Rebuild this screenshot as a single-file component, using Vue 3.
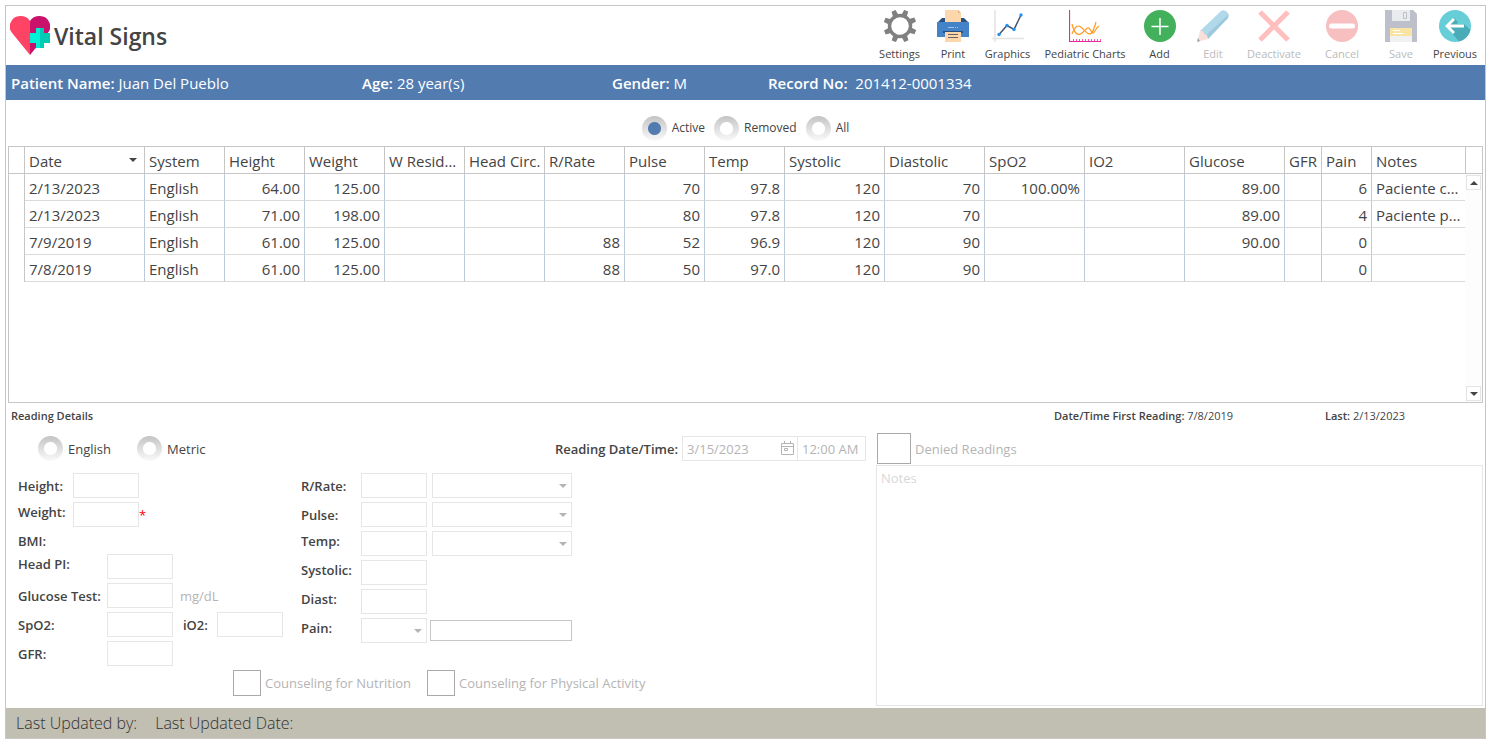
<script setup>
import { ref } from 'vue'

const tools = [
  { id: 'settings', label: 'Settings' },
  { id: 'print', label: 'Print' },
  { id: 'graphics', label: 'Graphics' },
  { id: 'pediatric', label: 'Pediatric Charts' },
  { id: 'add', label: 'Add' },
  { id: 'edit', label: 'Edit', disabled: true },
  { id: 'deactivate', label: 'Deactivate', disabled: true },
  { id: 'cancel', label: 'Cancel', disabled: true },
  { id: 'save', label: 'Save', disabled: true },
  { id: 'previous', label: 'Previous' },
]

const filter = ref('Active')
const filters = ['Active', 'Removed', 'All']
const unit = ref('')

const columns = [
  { key: 'date', label: 'Date', size: 'w120', text: true, sorted: true },
  { key: 'system', label: 'System', size: 'w80', text: true },
  { key: 'height', label: 'Height', size: 'w80' },
  { key: 'weight', label: 'Weight', size: 'w80' },
  { key: 'resid', label: 'W Residual', size: 'w80' },
  { key: 'head', label: 'Head Circ.', size: 'w80', tight: true },
  { key: 'rate', label: 'R/Rate', size: 'w80' },
  { key: 'pulse', label: 'Pulse', size: 'w80' },
  { key: 'temp', label: 'Temp', size: 'w80' },
  { key: 'systolic', label: 'Systolic', size: 'w100' },
  { key: 'diastolic', label: 'Diastolic', size: 'w100' },
  { key: 'spo2', label: 'SpO2', size: 'w100' },
  { key: 'io2', label: 'IO2', size: 'w100' },
  { key: 'glucose', label: 'Glucose', size: 'w100' },
  { key: 'gfr', label: 'GFR', size: 'w37', tight: true },
  { key: 'pain', label: 'Pain', size: 'w50' },
  { key: 'notes', label: 'Notes', size: 'auto', text: true },
]

const rows = [
  { date: '2/13/2023', system: 'English', height: '64.00', weight: '125.00', pulse: '70', temp: '97.8', systolic: '120', diastolic: '70', spo2: '100.00%', glucose: '89.00', pain: '6', notes: 'Paciente control' },
  { date: '2/13/2023', system: 'English', height: '71.00', weight: '198.00', pulse: '80', temp: '97.8', systolic: '120', diastolic: '70', glucose: '89.00', pain: '4', notes: 'Paciente presenta' },
  { date: '7/9/2019', system: 'English', height: '61.00', weight: '125.00', rate: '88', pulse: '52', temp: '96.9', systolic: '120', diastolic: '90', glucose: '90.00', pain: '0' },
  { date: '7/8/2019', system: 'English', height: '61.00', weight: '125.00', rate: '88', pulse: '50', temp: '97.0', systolic: '120', diastolic: '90', pain: '0' },
]
const teeth = [0, 45, 90, 135, 180, 225, 270, 315]
</script>

<template>
  <div class="page">
    <main class="frame">
      <header class="top">
        <div class="brand">
          <svg class="heart" viewBox="0 0 40 40" aria-hidden="true">
            <path d="M20 39 2.500 17.500A10.500 10.500 0 0 1 10.500 0Q17 0 20 5z" fill="#ff4365" />
            <path d="M20 39 37.500 17.500A10.500 10.500 0 0 0 29.500 0Q23 0 20 5z" fill="#c8126c" />
            <path d="M20 17h6v-5h4v20h-4v-5h-6z" fill="#00f0d8" />
            <path d="M30 12h4v5h6v10h-6v5h-4z" fill="#00ccb4" />
          </svg>
          <h1>Vital Signs</h1>
        </div>
        <nav class="toolbar">
          <button v-for="t in tools" :key="t.id" type="button" class="tool" :disabled="t.disabled">
            <svg class="tool-icon" viewBox="0 0 32 32" aria-hidden="true">
              <g v-if="t.id === 'settings'" fill="#808080" transform="rotate(22 16 16)">
                <circle cx="16" cy="16" r="10.500" fill="none" stroke="#808080" stroke-width="3.400" />
                <path v-for="a in teeth" :key="a" d="M13.200 5 13.800-.5h4.400l.6 5.500z" :transform="`rotate(${a} 16 16)`" />
              </g>
              <g v-else-if="t.id === 'print'">
                <path d="M5 8h22l5 5H0z" fill="#2a5280" />
                <path d="M8 0h13l3 3v9H8z" fill="#fdd6ab" />
                <path d="M21 0v3h3z" fill="#d9b58e" />
                <path d="M0 13q0-1 1-1h30q1 0 1 1v14H0z" fill="#4483c8" />
                <path d="M6 21h20v2H6z" fill="#2a4f7c" />
                <path d="M8 22h16v10H8z" fill="#fdd6ab" />
                <path d="M11 17.500h6m1 0h1m1 0h1" stroke="#9cc4ee" />
                <path d="M11 24.500h10M11 27.500h10" stroke="#6d645e" />
              </g>
              <g v-else-if="t.id === 'graphics'" fill="none">
                <path d="M3 0v32M0 28.500h32" stroke="#e6e2e2" stroke-width="1.500" />
                <path d="m7 24.500 8-9 7 4L29 5" stroke="#46536b" stroke-width="1.500" />
                <g fill="#2492f4"><circle cx="7" cy="24.500" r="1.700" /><circle cx="15" cy="15.500" r="1.700" /><circle cx="22" cy="19.500" r="1.700" /><circle cx="29" cy="5" r="1.700" /></g>
              </g>
              <g v-else-if="t.id === 'pediatric'" fill="none">
                <path d="M.5 0v31.500h31.500" stroke="#f0269a" stroke-width="1.200" />
                <path d="M4 30h28" stroke="#f0269a" stroke-width="1.500" stroke-dasharray="1 2" />
                <path d="M3 24C6 16 9 14 13 18S22 29 25 18Q26 16 27 12M3 14C5 22 8 27 13 23S19 15 22 21 26 18 30 16" stroke="#ff9a24" stroke-width="1.200" />
              </g>
              <g v-else-if="t.id === 'add'">
                <circle cx="16" cy="16" r="16" fill="#43b05c" />
                <path d="M16 8v17M7.500 16.500h17" stroke="#fff" stroke-width="1.500" />
              </g>
              <g v-else-if="t.id === 'edit'">
                <path d="M24 1q3-2 6 1t1 6L11 29 3 21z" fill="#b1d9e9" />
                <path d="m31 5 0 3-20 21-3-3z" fill="#9dc9dc" />
                <path d="m3 21 3 0 1 3 3 1 1 4-11 3z" fill="#fadfd8" />
                <path d="m1 28 2 3-3 1z" fill="#8fa8b3" />
              </g>
              <path v-else-if="t.id === 'deactivate'" d="m2 2 28 28M30 2 2 30" stroke="#ffbfbf" stroke-width="5" />
              <g v-else-if="t.id === 'cancel'">
                <circle cx="16" cy="16" r="16" fill="#f7bfc0" />
                <path d="M5.500 16h21" stroke="#fff" stroke-width="5" stroke-linecap="round" />
              </g>
              <g v-else-if="t.id === 'save'">
                <path d="M0 0h28l4 4v28H0z" fill="#bdc0ca" />
                <path d="M7 0h18v11H7z" fill="#e9ebee" />
                <path d="M18.500 2.500h3v6h-3z" fill="none" stroke="#bdc0ca" />
                <path d="M5 18h22v14H5z" fill="#f0f1f3" />
                <path d="M5 18h22v8H5z" fill="#fae4a4" />
                <path d="M8 20.500h7M8 23.500h10" stroke="#fff" />
              </g>
              <g v-else>
                <circle cx="16" cy="16" r="16" fill="#67ced8" />
                <path d="m15 8 4 4-1 2h7l6.500 6A16 16 0 0 1 20 31.500L8 17z" fill="#49acb8" />
                <path d="M25 16H9m6-7-7 7 7 7" fill="none" stroke="#fff" stroke-width="2.800" />
              </g>
            </svg>
            <span>{{ t.label }}</span>
          </button>
        </nav>
      </header>

      <section class="patient">
        <span><b>Patient Name:</b> Juan Del Pueblo</span>
        <span><b>Age:</b> 28 year(s)</span>
        <span><b>Gender:</b> M</span>
        <span><b>Record No:</b>&nbsp; 201412-0001334</span>
      </section>

      <div class="filters">
        <label v-for="f in filters" :key="f" class="choice small">
          <input v-model="filter" type="radio" name="filter" :value="f" />{{ f }}
        </label>
      </div>

      <div class="sheet">
        <table>
          <colgroup>
            <col class="w16" />
            <col v-for="c in columns" :key="c.key" :class="c.size" />
            <col class="w16" />
          </colgroup>
          <thead>
            <tr>
              <th></th>
              <th v-for="c in columns" :key="c.key" :class="{ sorted: c.sorted, tight: c.tight }">{{ c.label }}</th>
              <th class="last"></th>
            </tr>
          </thead>
          <tbody>
            <tr v-for="(r, i) in rows" :key="i">
              <td class="mark"></td>
              <td v-for="c in columns" :key="c.key" :class="{ num: !c.text, end: c.key === 'notes' }">{{ r[c.key] }}</td>
              <td class="blank"></td>
            </tr>
          </tbody>
        </table>
        <div class="scroll">
          <button type="button" aria-label="Scroll up"><i class="up"></i></button>
          <button type="button" aria-label="Scroll down"><i class="down"></i></button>
        </div>
      </div>

      <div class="summary">
        <h2>Reading Details</h2>
        <span><b>Date/Time First Reading:</b> 7/8/2019</span>
        <span><b>Last:</b> 2/13/2023</span>
      </div>

      <form class="details" @submit.prevent>
        <div class="entry">
          <div class="mode">
            <label class="choice"><input v-model="unit" type="radio" name="unit" value="English" />English</label>
            <label class="choice"><input v-model="unit" type="radio" name="unit" value="Metric" />Metric</label>
            <div class="when">
              <label for="rdate">Reading Date/Time:</label>
              <span class="date">
                <input id="rdate" type="text" value="3/15/2023" disabled />
                <svg viewBox="0 0 13 14" aria-hidden="true">
                  <path d="M.5 2.500h12v11H.5zM.5 5.500h12M3.500 0v3M9.500 0v3M3.500 7.500h3v2h-3z" fill="none" stroke="#b4b4b4" />
                </svg>
              </span>
              <input class="time" type="text" value="12:00 AM" aria-label="Reading time" disabled />
            </div>
          </div>

          <div class="fields">
            <div class="column">
              <div class="row narrow"><label for="height">Height:</label><input id="height" type="text" disabled /></div>
              <div class="row narrow"><label for="weight" class="raised">Weight:</label><input id="weight" type="text" disabled /><em>*</em></div>
              <div class="row bmi"><span class="name">BMI:</span></div>
              <div class="row"><label for="headpi" class="raised">Head PI:</label><input id="headpi" type="text" disabled /></div>
              <div class="row"><label for="glucose">Glucose Test:</label><input id="glucose" type="text" disabled /><span class="unit">mg/dL</span></div>
              <div class="row"><label for="spo2">SpO2:</label><input id="spo2" type="text" disabled /><label for="io2" class="io2">iO2:</label><input id="io2" type="text" disabled /></div>
              <div class="row"><label for="gfr">GFR:</label><input id="gfr" type="text" disabled /></div>
            </div>
            <div class="column second">
              <div class="row"><label for="rrate">R/Rate:</label><input id="rrate" type="text" disabled /><span class="pick wide"><select aria-label="R/Rate type" disabled></select></span></div>
              <div class="row"><label for="pulse">Pulse:</label><input id="pulse" type="text" disabled /><span class="pick wide"><select aria-label="Pulse type" disabled></select></span></div>
              <div class="row"><label for="temp" class="raised">Temp:</label><input id="temp" type="text" disabled /><span class="pick wide"><select aria-label="Temp type" disabled></select></span></div>
              <div class="row"><label for="systolic" class="raised">Systolic:</label><input id="systolic" type="text" disabled /></div>
              <div class="row"><label for="diast" class="raised">Diast:</label><input id="diast" type="text" disabled /></div>
              <div class="row"><label for="pain" class="raised">Pain:</label><span class="pick"><select id="pain" disabled></select></span><input class="remark" type="text" aria-label="Pain description" /></div>
            </div>
          </div>

          <div class="counsel">
            <label class="check"><input type="checkbox" disabled />Counseling for Nutrition</label>
            <label class="check"><input type="checkbox" disabled />Counseling for Physical Activity</label>
          </div>
        </div>

        <div class="remarks">
          <label class="check large"><input type="checkbox" disabled />Denied Readings</label>
          <textarea placeholder="Notes" aria-label="Notes" disabled></textarea>
        </div>
      </form>

      <footer><span>Last Updated by:</span><span>Last Updated Date:</span></footer>
    </main>
  </div>
</template>

<style>
body { background: #fff; }
</style>

<style scoped>
*, *::before, *::after { box-sizing: border-box; }
.page {
  min-height: 100vh;
  padding: 5px 6px 5px 5px;
  display: flex;
  color: #444;
  font: 13px/20px "Open Sans", "Noto Sans", sans-serif;
}
input, select, textarea, button { font: inherit; color: inherit; margin: 0; }
b { font-weight: 600; }
.frame {
  flex: 1;
  min-width: 0;
  display: flex;
  flex-direction: column;
  border: 1px solid #c6c6c6;
}

.top { display: flex; justify-content: space-between; height: 59px; }
.brand { display: flex; align-items: center; gap: 4px; padding: 0 0 0 4px; }
.heart { width: 40px; height: 40px; }
h1 { margin: 0; font-size: 23px; line-height: 30px; font-weight: 600; }
.toolbar {
  display: grid;
  grid-template-columns: 55px 52px 57px 98px 51px 56px 66px 70px 48px 60px;
}
.tool {
  border: 0;
  padding: 4px 0 0;
  background: none;
  display: flex;
  flex-direction: column;
  align-items: center;
  gap: 2px;
  font-size: 11px;
  white-space: nowrap;
}
.tool:disabled { color: #bbb; }
.tool-icon { width: 32px; height: 32px; flex: none; }

.patient {
  height: 35px;
  padding: 0 5px;
  display: grid;
  grid-template-columns: 351px 250px 156px 1fr;
  align-items: center;
  background: #527bb0;
  color: #fff;
  font-size: 15px;
}

.filters { display: flex; justify-content: center; gap: 9px; height: 46px; padding-top: 10px; }
.choice { display: flex; align-items: center; gap: 5px; }
.small { font-size: 12px; }
input[type="radio"] {
  appearance: none;
  width: 25px;
  height: 25px;
  border-radius: 50%;
  background: radial-gradient(circle, #fff 6px, transparent 7px), linear-gradient(#c4c4c4, #fafafa);
}
input[type="radio"]:checked {
  background: radial-gradient(circle, #527bb0 6px, transparent 7px), linear-gradient(#c4c4c4, #fafafa);
}

.sheet { position: relative; height: 257px; margin: 0 2px; border: 1px solid #c6c6c6; }
table { width: 100%; table-layout: fixed; border-collapse: separate; border-spacing: 0; font-size: 15px; }
.w16 { width: 16px; }
.w37 { width: 37px; }
.w50 { width: 50px; }
.w80 { width: 80px; }
.w100 { width: 100px; }
.w120 { width: 120px; }
th, td {
  height: 27px;
  padding: 2px 4px 0;
  line-height: 20px;
  font-weight: 400;
  text-align: left;
  white-space: nowrap;
  overflow: hidden;
  text-overflow: ellipsis;
  border-right: 1px solid #c6c6c6;
  border-bottom: 1px solid #c6c6c6;
}
td { border-right-color: #bccbdc; border-bottom-color: #dadada; }
th.last { border-right: 0; }
th.tight { padding-right: 0; text-overflow: clip; }
th.sorted { position: relative; }
th.sorted::after {
  content: "";
  position: absolute;
  right: 7px;
  top: 11px;
  border: 4px solid transparent;
  border-top-color: #444;
  border-bottom: 0;
}
td.num { text-align: right; }
td.mark { border-bottom: 0; border-right-color: #c6c6c6; }
td.end { border-right: 0; }
td.blank { border: 0; }
.scroll {
  position: absolute;
  top: 27px;
  right: 0;
  bottom: 0;
  width: 17px;
  padding: 1px;
  display: flex;
  flex-direction: column;
  justify-content: space-between;
  background: #fdfdfd;
}
.scroll button {
  width: 15px;
  height: 15px;
  padding: 0;
  border: 1px solid #e4e4e4;
  background: #fff;
  display: grid;
  place-items: center;
}
.scroll i { border: 4px solid transparent; }
.scroll .up { border-top: 0; border-bottom-color: #444; }
.scroll .down { border-bottom: 0; border-top-color: #444; }

.summary {
  display: grid;
  grid-template-columns: 1fr 271px 160px;
  align-items: center;
  height: 25px;
  padding-left: 5px;
  font-size: 11px;
}
h2 { margin: 0; font-size: 11px; font-weight: 600; }

.details { flex: 1; display: grid; grid-template-columns: 870px 1fr; padding: 0 2px 2px 0; }
.mode { display: flex; align-items: center; gap: 26px; height: 41px; padding: 0 10px 0 32px; }
.when { display: flex; align-items: center; margin-left: auto; font-weight: 600; }
.when label { margin-right: 4px; }
.date { position: relative; }
.date svg { position: absolute; right: 4px; top: 5px; width: 13px; height: 14px; }
input[type="text"] {
  width: 66px;
  height: 25px;
  padding: 0 4px;
  border: 1px solid #e6e6e6;
  background: #fff;
  border-radius: 0;
}
input[type="text"]:disabled { color: #b4b4b4; font-weight: 400; }
.date input[type="text"] { width: 116px; display: block; }
.when input.time[type="text"] { width: 69px; margin-left: -1px; }

.fields { display: grid; grid-template-columns: 283px 1fr; padding: 4px 0 4px 12px; }
.column { display: flex; flex-direction: column; gap: 4px; }
.row { display: flex; height: 25px; align-items: center; }
.row label, .name { width: 89px; font-weight: 600; white-space: nowrap; }
.row.narrow label { width: 55px; }
.row.bmi { height: 19px; }
.row label.io2 { width: 34px; margin-left: 10px; }
.row .raised { padding-bottom: 6px; }
.second .row label { width: 60px; }
.row em { color: #f00; font-style: normal; }
.unit { margin-left: 7px; color: #b4b4b4; }
.pick { position: relative; width: 66px; height: 25px; }
.pick.wide { width: 140px; margin-left: 5px; }
.pick select {
  appearance: none;
  display: block;
  width: 100%;
  height: 100%;
  border: 1px solid #e6e6e6;
  border-radius: 0;
  background: #fff;
  opacity: 1;
}
.pick::after {
  content: "";
  position: absolute;
  right: 5px;
  top: 11px;
  border: 4px solid transparent;
  border-top-color: #b4b4b4;
  border-bottom: 0;
}
.row input.remark[type="text"] { width: 142px; height: 21px; margin-left: 3px; border-color: #c6c6c6; }

.counsel { display: flex; gap: 16px; padding-left: 227px; }
.check { display: flex; align-items: center; gap: 4px; color: #b4b4b4; white-space: nowrap; }
.check input {
  appearance: none;
  width: 28px;
  height: 26px;
  border: 1px solid #aaa;
  background: #fff;
}
.remarks { display: flex; flex-direction: column; gap: 1px; padding-top: 5px; }
.large { padding-left: 1px; }
.check.large input { width: 34px; height: 31px; }
textarea {
  flex: 1;
  width: 100%;
  padding: 2px 4px;
  border: 1px solid #e6e6e6;
  background: #fff;
  resize: none;
}
textarea::placeholder { color: #d8d8d8; opacity: 1; }

footer {
  display: flex;
  gap: 18px;
  align-items: center;
  height: 30px;
  padding: 0 10px;
  background: #c1beb2;
  color: #333;
  font-size: 16px;
  font-weight: 300;
}
</style>
